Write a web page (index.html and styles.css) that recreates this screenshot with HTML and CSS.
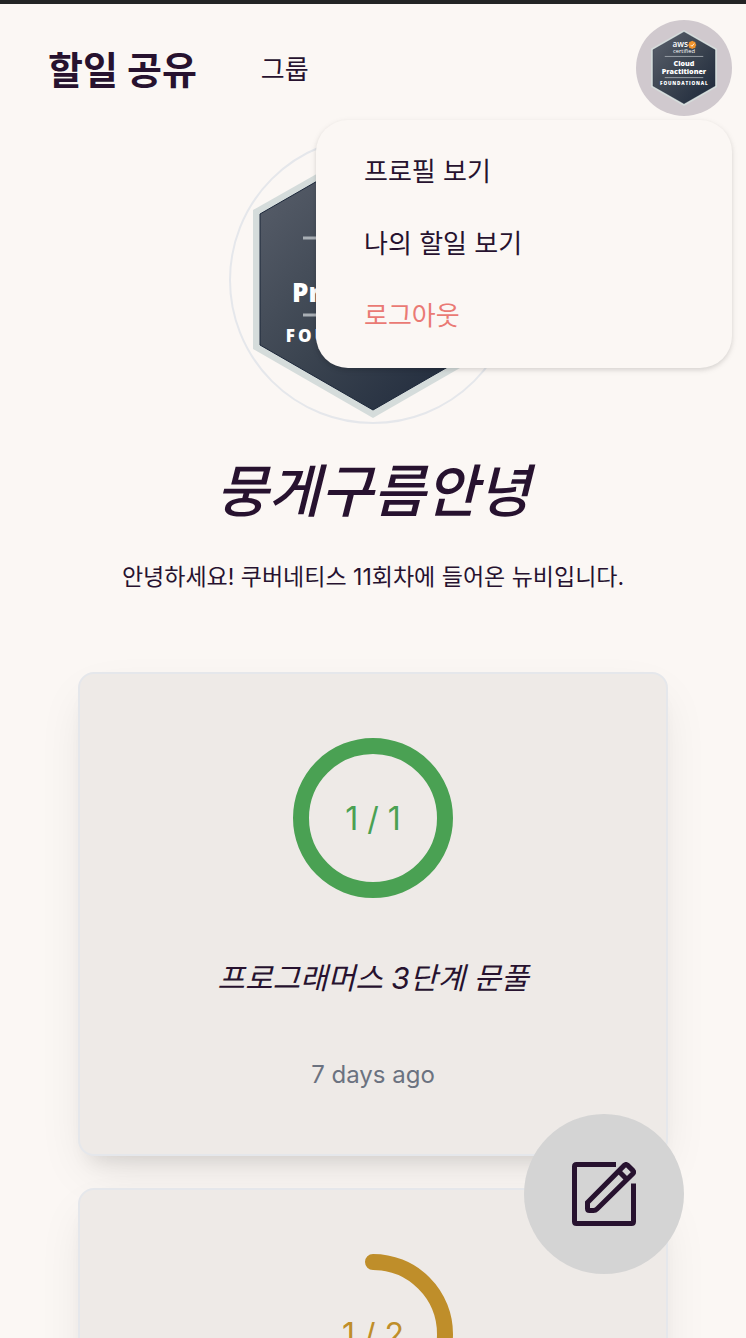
FILE: index.html
```html
<!DOCTYPE html>
<html lang="ko">
<head>
<meta charset="utf-8">
<meta name="viewport" content="width=device-width, initial-scale=1">
<title>할일 공유</title>
<link rel="stylesheet" href="styles.css">
</head>
<body>
<svg class="defs" width="0" height="0" aria-hidden="true">
  <defs>
    <linearGradient id="slate" x1="0" y1="0" x2="1" y2="1">
      <stop offset="0" stop-color="#5b616d"/>
      <stop offset="0.5" stop-color="#3b4450"/>
      <stop offset="1" stop-color="#1b2639"/>
    </linearGradient>
    <symbol id="badge" viewBox="0 0 240 276">
      <path d="M120 0L240 68V207L120 276L0 207V68Z" fill="#d5dcdb"/>
      <path d="M120 7L233 72V203L120 268L7 203V72Z" fill="url(#slate)" stroke="#1b2639" stroke-width="1"/>
      <text class="badge-aws" x="106" y="61">aws</text>
      <path d="M150 39l5 3 6 1 1 6 3 5-3 5-1 6-6 1-5 3-5-3-6-1-1-6-3-5 3-5 1-6 6-1z" fill="#f0932b"/>
      <path d="M144 54l5 5 8-10" fill="none" stroke="#fff" stroke-width="3"/>
      <text class="badge-certified" x="120" y="83">certified</text>
      <path d="M50 96H190M50 173H190" stroke="#a9afb5" stroke-width="3"/>
      <text class="badge-name" x="120" y="130">Cloud</text>
      <text class="badge-name" x="120" y="160">Practitioner</text>
      <text class="badge-level" x="121" y="200">FOUNDATIONAL</text>
    </symbol>
  </defs>
</svg>

<div class="app">
  <header class="topbar">
    <a class="brand" href="#">할일 공유</a>
    <nav class="links"><a href="#">그룹</a></nav>
    <div class="account">
      <button class="avatar" type="button" aria-label="계정 메뉴" aria-expanded="true">
        <svg class="avatar-badge"><use href="#badge"/></svg>
      </button>
      <ul class="menu">
        <li><a href="#">프로필 보기</a></li>
        <li><a href="#">나의 할일 보기</a></li>
        <li><button class="logout" type="button">로그아웃</button></li>
      </ul>
    </div>
  </header>

  <main class="content">
    <section class="profile">
      <div class="portrait"><svg class="portrait-badge"><use href="#badge"/></svg></div>
      <h1 class="name">뭉게구름안녕</h1>
      <p class="bio">안녕하세요! 쿠버네티스 11회차에 들어온 뉴비입니다.</p>
    </section>

    <section class="cards">
      <article class="card">
        <div class="ring done">
          <svg class="ring-art" viewBox="0 0 160 160" aria-hidden="true"><circle cx="80" cy="80" r="72"/></svg>
          <span class="ring-label">1 / 1</span>
        </div>
        <h2 class="card-title">프로그래머스 3단계 문풀</h2>
        <time class="card-time">7 days ago</time>
      </article>
      <article class="card">
        <div class="ring partial">
          <svg class="ring-art" viewBox="0 0 160 160" aria-hidden="true"><path d="M80 8A72 72 0 0 1 80 152"/></svg>
          <span class="ring-label">1 / 2</span>
        </div>
      </article>
    </section>
  </main>

  <button class="compose" type="button" aria-label="할일 작성">
    <svg class="compose-icon" viewBox="0 0 64 64" aria-hidden="true">
      <path d="M44 2.500H4.500Q2.500 2.500 2.500 4.500V59.500Q2.500 61.500 4.500 61.500H59.500Q61.500 61.500 61.500 59.500V21.500"/>
      <path d="M15.500 40.500L52.500 3.200Q54 1.900 55.500 3.200L61 8.600Q62.300 10 61 11.500L25 47Q23.500 48.500 21.500 48.500H17.500Q15.500 48.500 15.500 46.500ZM47 9.500L54.500 17"/>
    </svg>
  </button>
</div>
</body>
</html>
```

FILE: styles.css
```css
* {
  box-sizing: border-box;
}

body {
  margin: 0;
  background: #fbf7f4;
  color: #27122f;
  font-family: Inter, "Noto Sans CJK KR", sans-serif;
}

h1, h2, p, ul {
  margin: 0;
  padding: 0;
}

a {
  color: inherit;
  text-decoration: none;
}

button {
  border: 0;
  padding: 0;
  font: inherit;
  color: inherit;
  background: none;
  cursor: pointer;
}

.defs {
  position: absolute;
}

.app {
  height: 100vh;
  overflow-y: auto;
  scrollbar-width: none;
}

.topbar {
  display: flex;
  align-items: center;
  padding: 16px 14px 16px 48px;
  border-top: 4px solid #232425;
}

.brand,
.links {
  padding-top: 4px;
}

.brand {
  font-size: 38px;
  font-weight: 700;
  line-height: 48px;
}

.links {
  margin-left: 64px;
  font-size: 26px;
  line-height: 40px;
}

.account {
  position: relative;
  margin-left: auto;
}

.avatar {
  display: flex;
  align-items: center;
  justify-content: center;
  width: 96px;
  height: 96px;
  border-radius: 50%;
  background: #d0c9ce;
}

.avatar-badge {
  width: 66px;
  height: 76px;
}

.menu {
  position: absolute;
  top: 100%;
  right: 0;
  z-index: 2;
  width: 416px;
  margin-top: 4px;
  padding: 16px 0;
  list-style: none;
  border-radius: 32px;
  background: #fbf7f4;
  box-shadow: 0 2px 6px rgba(0, 0, 0, 0.1), 0 2px 4px rgba(0, 0, 0, 0.06);
  font-size: 26px;
}

.menu a,
.menu button {
  display: block;
  width: 100%;
  padding: 0 48px;
  line-height: 72px;
  text-align: left;
}

.menu .logout {
  color: #ea7a74;
}

.content {
  padding: 4px 78px 64px;
}

.profile {
  display: flex;
  flex-direction: column;
  align-items: center;
  text-align: center;
}

.portrait {
  display: flex;
  align-items: center;
  justify-content: center;
  width: 288px;
  height: 288px;
  border: 2px solid #e5e7eb;
  border-radius: 50%;
}

.portrait-badge {
  width: 240px;
  height: 276px;
}

.badge-aws,
.badge-certified,
.badge-name,
.badge-level {
  fill: #fff;
  text-anchor: middle;
  font-family: "Open Sans", sans-serif;
}

.badge-aws {
  font-size: 30px;
  font-weight: 600;
}

.badge-certified {
  font-size: 21px;
}

.badge-name {
  font-size: 26px;
  font-weight: 800;
}

.badge-level {
  font-size: 17px;
  font-weight: 800;
  letter-spacing: 3px;
}

.name {
  margin-top: 32px;
  font-size: 57px;
  font-style: italic;
  font-weight: 500;
  line-height: 72px;
}

.bio {
  margin-top: 32px;
  font-size: 23px;
  line-height: 34px;
}

.cards {
  display: flex;
  flex-direction: column;
  gap: 32px;
  margin-top: 78px;
}

.card {
  display: flex;
  flex-direction: column;
  align-items: center;
  min-height: 484px;
  padding: 64px 64px 60px;
  border: 2px solid #e5e7eb;
  border-radius: 16px;
  background: #eeeae7;
  box-shadow: 0 20px 50px -10px rgba(0, 0, 0, 0.1), 0 16px 20px -12px rgba(0, 0, 0, 0.1);
}

.ring {
  display: grid;
  place-items: center;
  width: 160px;
  height: 160px;
}

.ring > * {
  grid-area: 1 / 1;
}

.ring-art {
  width: 100%;
  height: 100%;
  fill: none;
  stroke: currentColor;
  stroke-width: 16;
  stroke-linecap: round;
}

.ring-label {
  padding-top: 2px;
  font-size: 32px;
  line-height: 40px;
}

.done {
  color: #4aa153;
}

.partial {
  color: #bf8e2a;
}

.card-title {
  margin-top: 60px;
  font-size: 30px;
  font-style: italic;
  font-weight: 400;
  line-height: 40px;
}

.card-time {
  margin-top: 60px;
  color: #6b7280;
  font-size: 24px;
  line-height: 34px;
}

.compose {
  position: fixed;
  right: 62px;
  bottom: 64px;
  z-index: 3;
  display: flex;
  align-items: center;
  justify-content: center;
  width: 160px;
  height: 160px;
  border-radius: 50%;
  background: #d4d4d4;
}

.compose-icon {
  width: 64px;
  height: 64px;
  fill: none;
  stroke: #27122f;
  stroke-width: 5;
}
```
